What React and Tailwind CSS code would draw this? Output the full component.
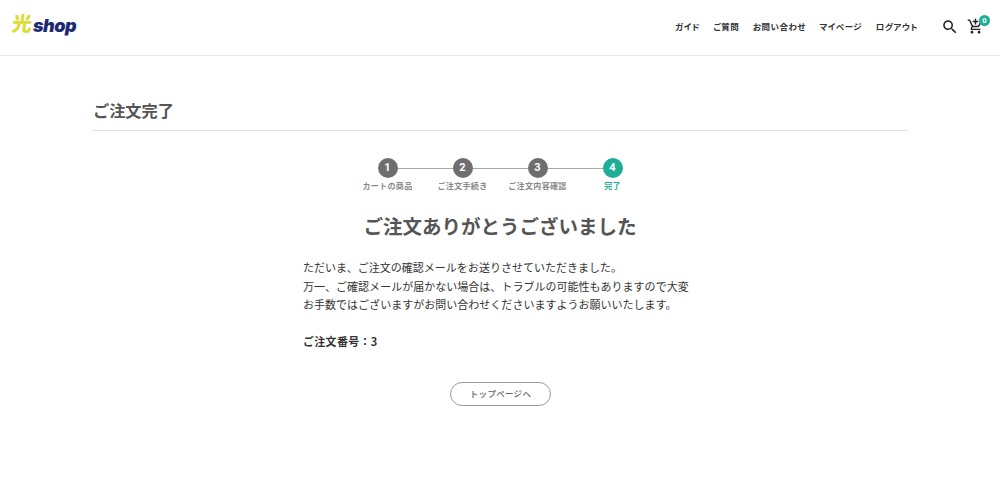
import React from "react";

const steps = [
  ["1", "カートの商品"],
  ["2", "ご注文手続き"],
  ["3", "ご注文内容確認"],
  ["4", "完了"],
];
const nav = ["ガイド", "ご質問", "お問い合わせ", "マイページ", "ログアウト"];

export default function App() {
  return (
    <div className="w-[1000px] h-[480px] overflow-hidden bg-white font-['Noto_Sans_CJK_JP','Noto_Sans',sans-serif] text-[#333]">
      <header className="h-[56px] border-b border-[#e8e8e8] flex items-center pl-[12px] pr-[16px] pb-[3px]">
        <div className="flex items-center -mt-[3px]">
          <span className="text-[20px] leading-[24px] font-black text-[#dedb3c] -skew-x-6 -mt-[4px]">光</span>
          <span className="ml-[1px] text-[18px] leading-[22px] font-['Inter',sans-serif] font-black italic text-[#1b2a72] tracking-[-0.5px] mt-[3px]">shop</span>
        </div>
        <nav className="ml-auto flex items-center gap-[13.5px] text-[8.5px] font-bold tracking-[0.5px] text-[#333] mr-[23px] [font-feature-settings:'palt']">
          {nav.map((n) => <span key={n}>{n}</span>)}
        </nav>
        <svg width="18" height="18" viewBox="0 0 24 24" fill="#222" className="mr-[8px] mt-[1px]">
          <path d="M15.5 14h-.79l-.28-.27C15.41 12.59 16 11.11 16 9.5 16 5.91 13.09 3 9.5 3S3 5.91 3 9.5 5.91 16 9.5 16c1.61 0 3.09-.59 4.23-1.57l.27.28v.79l5 4.99L20.49 19l-4.99-5zm-6 0C7.01 14 5 11.99 5 9.5S7.01 5 9.5 5 14 7.01 14 9.5 11.99 14 9.5 14z" />
        </svg>
        <div className="relative w-[17px] h-[18px]">
          <svg width="17" height="17" viewBox="0 0 24 24" fill="#222" className="mt-[1px]">
            <path d="M11 9h2V6h3V4h-3V1h-2v3H8v2h3v3zm-4 9c-1.1 0-1.99.9-1.99 2S5.9 22 7 22s2-.9 2-2-.9-2-2-2zm10 0c-1.1 0-1.99.9-1.99 2s.89 2 1.99 2 2-.9 2-2-.9-2-2-2zm-9.83-3.25l.03-.12.9-1.63h7.45c.75 0 1.41-.41 1.75-1.03l3.86-7.01L19.42 4h-.01l-1.1 2-2.76 5H8.53l-.13-.27L6.16 6l-.95-2-.94-2H1v2h2l3.6 7.59-1.35 2.45c-.16.28-.25.61-.25.96 0 1.1.9 2 2 2h12v-2H7.42c-.13 0-.25-.11-.25-.25z" />
          </svg>
          <span className="absolute top-[-2px] left-[12px] w-[11px] h-[11px] rounded-full bg-[#1eae98] text-white text-[7.5px] leading-[11px] font-bold text-center font-['Roboto',sans-serif]">0</span>
        </div>
      </header>
      <main className="w-[816px] ml-[92px]">
        <h1 className="mt-[43px] h-[32px] pl-[1px] border-b border-[#e2e2e2] text-[16.2px] leading-[23px] font-bold text-[#555]">ご注文完了</h1>
        <div className="mt-[27px] flex justify-center relative">
          <div className="absolute top-[10px] left-[295px] w-[225px] h-px bg-[#aaa]" />
          {steps.map(([n, l], i) => (
            <div key={n} className="w-[75px] flex flex-col items-center relative">
              <div className={`w-[20px] h-[20px] rounded-full text-white text-[11px] leading-[20px] font-bold text-center font-['Roboto',sans-serif] ${i === 3 ? "bg-[#1eae98]" : "bg-[#6e6e6e]"}`}>{n}</div>
              <div className={`mt-[1px] whitespace-nowrap text-[8px] leading-[13px] font-bold tracking-[0.35px] ${i === 3 ? "text-[#1eae98]" : "text-[#8a8a8a]"}`}>{l}</div>
            </div>
          ))}
        </div>
        <h2 className="mt-[19px] text-center text-[19.5px] leading-[30px] font-bold text-[#555]">ご注文ありがとうございました</h2>
        <div className="mt-[17px] ml-[211px] text-[11px] leading-[18.5px] tracking-[0.02px] text-[#333] whitespace-nowrap">
          <p>ただいま、ご注文の確認メールをお送りさせていただきました。</p>
          <p>万一、ご確認メールが届かない場合は、トラブルの可能性もありますので大変</p>
          <p>お手数ではございますがお問い合わせくださいますようお願いいたします。</p>
          <p className="mt-[18px] font-bold text-[#333] tracking-[0.3px]">ご注文番号：3</p>
        </div>
        <div className="mt-[32px] flex justify-center pl-[1px]">
          <button className="w-[101px] h-[24px] pb-[2px] rounded-full border border-[#999] bg-white text-[8.5px] leading-[20px] font-medium text-[#666] tracking-[0.3px]">トップページへ</button>
        </div>
      </main>
    </div>
  );
}
